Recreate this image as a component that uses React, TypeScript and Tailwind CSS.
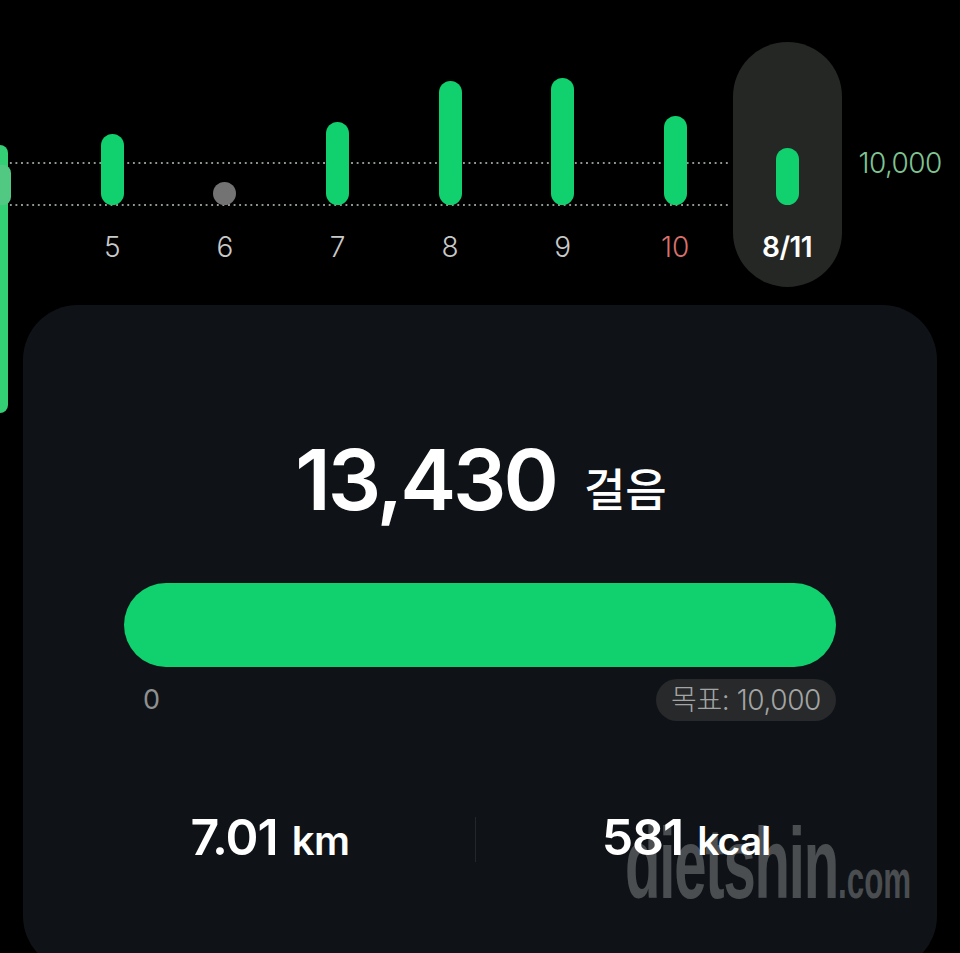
const days = [
  { label: "5", h: 71, color: "text-[#c9c9c9]" },
  { label: "6", h: 23, color: "text-[#c9c9c9]", idle: true },
  { label: "7", h: 83, color: "text-[#c9c9c9]" },
  { label: "8", h: 124, color: "text-[#c9c9c9]" },
  { label: "9", h: 127, color: "text-[#c9c9c9]" },
  { label: "10", h: 89, color: "text-[#d9706c]" },
];

function Dotted({ className }: { className: string }) {
  return (
    <div
      className={
        "absolute left-[8px] w-[722px] h-[2px] bg-[radial-gradient(circle,#8f9a8f_0.9px,transparent_1.1px)] bg-[length:5.6px_2px] " +
        className
      }
    />
  );
}

function Column({ label, h, color, idle }: { label: string; h: number; color: string; idle?: boolean }) {
  return (
    <div className="w-[112.6px] flex flex-col items-center">
      <div className="h-[205px] flex items-end">
        <div
          className={"w-[23px] rounded-full " + (idle ? "bg-[#737373]" : "bg-[#11d16f]")}
          style={{ height: h }}
        />
      </div>
      <div className={"mt-[24px] text-[28px] leading-[36px] font-light " + color}>{label}</div>
    </div>
  );
}

export default function App() {
  return (
    <div className="relative w-[960px] h-[953px] overflow-hidden bg-black font-['Inter','Noto_Sans_CJK_KR',sans-serif]">
      <div className="relative h-[305px]">
        <Dotted className="top-[162px]" />
        <Dotted className="top-[204px]" />
        <div className="absolute left-0 top-[145px] w-[8px] h-[268px] rounded-r-[8px] bg-[#34cf74]" />
        <div className="absolute left-0 top-[165px] w-[11px] h-[40px] rounded-r-[8px] bg-[#52c982]" />
        <div className="relative flex pl-[56px]">
          {days.map((d) => (
            <Column key={d.label} {...d} />
          ))}
          <div className="relative ml-[1px] w-[109px] h-[245px] mt-[42px] rounded-full bg-[#252725] flex flex-col items-center">
            <div className="h-[163px] flex items-end">
              <div className="w-[23px] h-[57px] rounded-full bg-[#11d16f]" />
            </div>
            <div className="mt-[24px] text-[28px] leading-[36px] font-semibold text-white tracking-[-0.5px]">8/11</div>
          </div>
          <div className="ml-[17px] mt-[145px] h-[36px] text-[28px] leading-[36px] font-light tracking-[-0.6px] text-[#7fc492]">10,000</div>
        </div>
      </div>

      <div className="mx-[23px] h-[666px] rounded-[55px] bg-[#0f1317] pt-[125px] flex flex-col">
        <div className="h-[100px] pl-[2px] flex items-center justify-center gap-[28px]">
          <span className="text-[84px] leading-[100px] font-semibold text-white tracking-[-3px]">13,430</span>
          <span className="mt-[22px] text-[45px] leading-[50px] font-medium text-white">걸음</span>
        </div>
        <div className="mt-[53px] mx-[101px] h-[84px] rounded-full bg-[#11d16f]" />
        <div className="mt-[12px] mx-[101px] h-[42px] flex items-center justify-between">
          <span className="ml-[19px] text-[27px] text-[#8f9091]">0</span>
          <span className="h-[42px] px-[15px] rounded-full bg-[#27292a] flex items-center text-[28px] font-light text-[#a3a4a4] tracking-[-0.4px]">
            목표: 10,000
          </span>
        </div>
        <div className="mt-[95px] ml-[42px] h-[46px] flex items-center">
          <div className="w-[410px] flex items-baseline justify-center gap-[14px] text-white font-semibold">
            <span className="text-[50px] leading-[46px] tracking-[-1px]">7.01</span>
            <span className="text-[40px] leading-[46px] font-semibold tracking-[-0.5px]">km</span>
          </div>
          <div className="w-[1px] h-[45px] bg-[#24272a]" />
          <div className="w-[420px] flex items-baseline justify-center gap-[14px] text-white font-semibold">
            <span className="text-[50px] leading-[46px] tracking-[-1px]">581</span>
            <span className="text-[39px] leading-[46px] font-semibold tracking-[-1px]">kcal</span>
          </div>
        </div>
      </div>

      <div className="absolute left-[625px] top-[813px] w-[290px] h-[100px] pointer-events-none">
        <div className="origin-top-left scale-x-[0.58] whitespace-nowrap font-['Liberation_Sans',sans-serif] font-bold text-white/25 flex items-baseline">
          <span className="text-[100px] leading-[100px] tracking-[-2px]">dietshin</span>
          <span className="text-[54px] leading-[100px]">.com</span>
        </div>
      </div>
    </div>
  );
}
